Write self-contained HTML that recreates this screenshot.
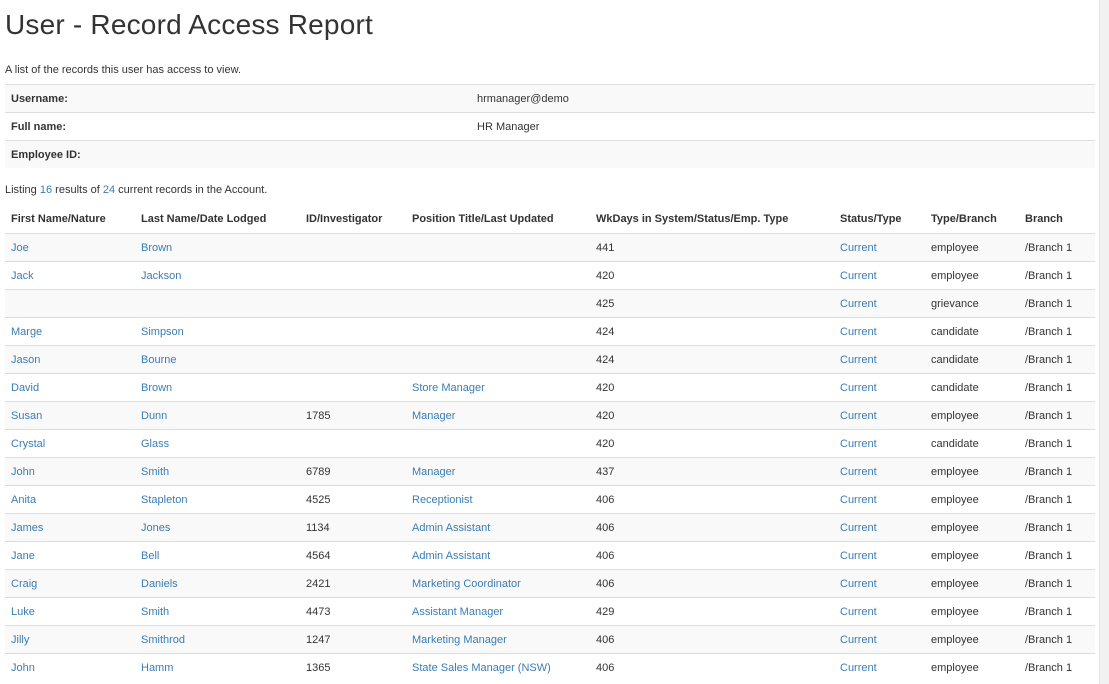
<!DOCTYPE html>
<html><head><style>
body{margin:0;background:#fff;font-family:"Liberation Sans",sans-serif;font-size:11px;color:#333;width:1109px;height:684px;overflow:hidden;position:relative}
h1{font-weight:300;font-size:28px;margin:0;position:absolute;left:5px;top:9px;color:#333;letter-spacing:0.2px}
.p{position:absolute;left:5px}
table{border-collapse:collapse;position:absolute;left:5px;width:1090px;table-layout:fixed}
td,th{height:27px;padding:0 6px;text-align:left;border-top:1px solid #ddd;white-space:nowrap}
th{font-weight:bold}
.s tr:nth-child(odd) td{background:#f9f9f9}
.d tbody tr:nth-child(odd) td{background:#f9f9f9}
.d thead th{border-top:none;border-bottom:1px solid #ddd;height:28px}
a{color:#3a7db3;text-decoration:none}
.sb{position:absolute;right:0;top:0;width:9px;height:684px;background:#f1f1f1;border-left:1px solid #e4e4e4}
</style></head><body>
<h1>User - Record Access Report</h1>
<div class="p" style="top:64px">A list of the records this user has access to view.</div>
<table class="s" style="top:84px">
<colgroup><col style="width:466px"><col></colgroup>
<tr><td><b>Username:</b></td><td>hrmanager@demo</td></tr>
<tr><td><b>Full name:</b></td><td>HR Manager</td></tr>
<tr><td style="border-bottom:none"><b>Employee ID:</b></td><td></td></tr>
</table>
<div class="p" style="top:184px">Listing <a>16</a> results of <a>24</a> current records in the Account.</div>
<table class="d" style="top:205px">
<colgroup><col style="width:130px"><col style="width:165px"><col style="width:106px"><col style="width:184px"><col style="width:244px"><col style="width:91px"><col style="width:94px"><col></colgroup>
<thead><tr><th>First Name/Nature</th><th>Last Name/Date Lodged</th><th>ID/Investigator</th><th>Position Title/Last Updated</th><th>WkDays in System/Status/Emp. Type</th><th>Status/Type</th><th>Type/Branch</th><th>Branch</th></tr></thead>
<tbody>
<tr><td><a>Joe</a></td><td><a>Brown</a></td><td></td><td></td><td>441</td><td><a>Current</a></td><td>employee</td><td>/Branch 1</td></tr>
<tr><td><a>Jack</a></td><td><a>Jackson</a></td><td></td><td></td><td>420</td><td><a>Current</a></td><td>employee</td><td>/Branch 1</td></tr>
<tr><td></td><td></td><td></td><td></td><td>425</td><td><a>Current</a></td><td>grievance</td><td>/Branch 1</td></tr>
<tr><td><a>Marge</a></td><td><a>Simpson</a></td><td></td><td></td><td>424</td><td><a>Current</a></td><td>candidate</td><td>/Branch 1</td></tr>
<tr><td><a>Jason</a></td><td><a>Bourne</a></td><td></td><td></td><td>424</td><td><a>Current</a></td><td>candidate</td><td>/Branch 1</td></tr>
<tr><td><a>David</a></td><td><a>Brown</a></td><td></td><td><a>Store Manager</a></td><td>420</td><td><a>Current</a></td><td>candidate</td><td>/Branch 1</td></tr>
<tr><td><a>Susan</a></td><td><a>Dunn</a></td><td>1785</td><td><a>Manager</a></td><td>420</td><td><a>Current</a></td><td>employee</td><td>/Branch 1</td></tr>
<tr><td><a>Crystal</a></td><td><a>Glass</a></td><td></td><td></td><td>420</td><td><a>Current</a></td><td>candidate</td><td>/Branch 1</td></tr>
<tr><td><a>John</a></td><td><a>Smith</a></td><td>6789</td><td><a>Manager</a></td><td>437</td><td><a>Current</a></td><td>employee</td><td>/Branch 1</td></tr>
<tr><td><a>Anita</a></td><td><a>Stapleton</a></td><td>4525</td><td><a>Receptionist</a></td><td>406</td><td><a>Current</a></td><td>employee</td><td>/Branch 1</td></tr>
<tr><td><a>James</a></td><td><a>Jones</a></td><td>1134</td><td><a>Admin Assistant</a></td><td>406</td><td><a>Current</a></td><td>employee</td><td>/Branch 1</td></tr>
<tr><td><a>Jane</a></td><td><a>Bell</a></td><td>4564</td><td><a>Admin Assistant</a></td><td>406</td><td><a>Current</a></td><td>employee</td><td>/Branch 1</td></tr>
<tr><td><a>Craig</a></td><td><a>Daniels</a></td><td>2421</td><td><a>Marketing Coordinator</a></td><td>406</td><td><a>Current</a></td><td>employee</td><td>/Branch 1</td></tr>
<tr><td><a>Luke</a></td><td><a>Smith</a></td><td>4473</td><td><a>Assistant Manager</a></td><td>429</td><td><a>Current</a></td><td>employee</td><td>/Branch 1</td></tr>
<tr><td><a>Jilly</a></td><td><a>Smithrod</a></td><td>1247</td><td><a>Marketing Manager</a></td><td>406</td><td><a>Current</a></td><td>employee</td><td>/Branch 1</td></tr>
<tr><td><a>John</a></td><td><a>Hamm</a></td><td>1365</td><td><a>State Sales Manager (NSW)</a></td><td>406</td><td><a>Current</a></td><td>employee</td><td>/Branch 1</td></tr>
</tbody></table>
<div class="sb"></div>
</body></html>
